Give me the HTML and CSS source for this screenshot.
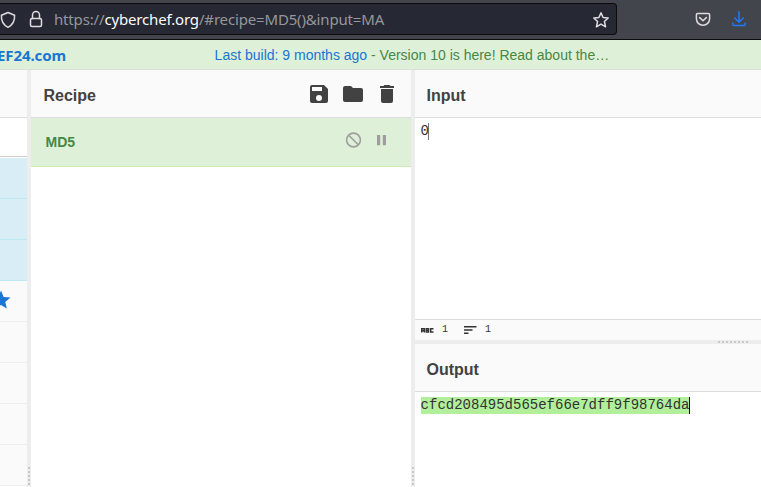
FILE: index.html
```html
<!DOCTYPE html>
<html lang="en">
<head>
<meta charset="utf-8">
<title>CyberChef</title>
<link rel="stylesheet" href="styles.css">
</head>
<body>
<header class="browser">
  <div class="urlbar">
    <svg class="shield" width="16" height="18" viewBox="0 0 16 18"><path d="M8 1.500 14.600 4.300C14.900 10 12.700 14 8 16.300 3.300 14 1.100 10 1.400 4.300Z"/></svg>
    <svg class="lock" width="14" height="18" viewBox="0 0 14 18"><rect x="1.500" y="8.500" width="11" height="8" rx="1.500"/><path d="M3.500 8.500V5a3.500 3.500 0 0 1 7 0v3.500"/></svg>
    <div class="url">https://<b>cyberchef.org</b>/#recipe=MD5()&amp;input=MA</div>
    <svg class="star" width="18" height="18" viewBox="0 0 18 18"><path d="M9 1.900 11.100 6.500 16.200 7 12.400 10.500 13.600 15.800 9 13.100 4.400 15.800 5.600 10.500 1.800 7 6.900 6.500Z"/></svg>
  </div>
  <svg class="pocket" width="16" height="16" viewBox="0 0 16 16"><path d="M2.700 2.400h10.600q1.300 0 1.300 1.300v4a6.600 6.600 0 0 1-13.200 0v-4q0-1.300 1.300-1.300ZM4.700 6.600 8 9.800l3.300-3.200"/></svg>
  <svg class="download" width="14" height="16" viewBox="0 0 14 16"><path d="M7 .8v10.500M2.700 7 7 11.200 11.300 7M.8 12v1.300q0 1.300 1.300 1.300h9.800q1.300 0 1.300-1.300V12"/></svg>
</header>
<div class="banner">
  <div class="brand">EF24.com</div>
  <div class="notice"><a>Last build: 9 months ago</a> - Version 10 is here! Read about the…</div>
</div>
<main class="workspace">
  <section class="operations">
    <div class="title"></div>
    <div class="search"></div>
    <div class="op"></div><div class="op"></div><div class="op"></div>
    <div class="category"><svg width="20" height="20" viewBox="0 0 20 20"><path d="M10 .5 12.600 6.900 19.500 7.400 14.200 11.900 15.900 18.600 10 15 4.100 18.600 5.800 11.900.5 7.400 7.400 6.900Z"/></svg></div>
    <div class="category"></div><div class="category"></div><div class="category"></div><div class="category"></div>
  </section>
  <div class="gutter"><i></i></div>
  <section class="recipe">
    <div class="title"><span>Recipe</span>
      <div class="actions">
        <svg width="24" height="24" viewBox="0 0 24 24"><path d="M17 3H5a2 2 0 0 0-2 2v14a2 2 0 0 0 2 2h14a2 2 0 0 0 2-2V7l-4-4zm-5 16a3 3 0 1 1 0-6 3 3 0 0 1 0 6zm3-10H5V5h10v4z"/></svg>
        <svg width="24" height="24" viewBox="0 0 24 24"><path d="M10 4H4a2 2 0 0 0-2 2v12a2 2 0 0 0 2 2h16a2 2 0 0 0 2-2V8a2 2 0 0 0-2-2h-8l-2-2z"/></svg>
        <svg width="24" height="24" viewBox="0 0 24 24"><path d="M6 19a2 2 0 0 0 2 2h8a2 2 0 0 0 2-2V7H6v12zM19 4h-3.500l-1-1h-5l-1 1H5v2h14V4z"/></svg>
      </div>
    </div>
    <div class="step"><span>MD5</span>
      <div class="controls">
        <svg width="18" height="18" viewBox="0 0 18 18"><circle cx="9.500" cy="9" r="6.900"/><path d="m4.700 4.200 9.600 9.600"/></svg>
        <svg class="pause" width="18" height="18" viewBox="0 0 18 18"><path d="M5 4h3.200v10.300H5zM10.800 4H14v10.300h-3.200z"/></svg>
      </div>
    </div>
  </section>
  <div class="gutter"><i></i></div>
  <section class="io">
    <div class="title"><span>Input</span></div>
    <div class="input"><span>0</span></div>
    <div class="status">
      <svg class="abc" width="13" height="5" viewBox="0 0 13 5"><path d="M.7 4.500V.7h2.600v3.800M.7 2.800h2.600M5.200.7h2.400v3.300H5.200ZM5 2.400h2.500M12.500.7H9.700v3.300h2.800"/></svg>
      <span>1</span>
      <svg class="lines" width="13" height="8" viewBox="0 0 13 8"><path d="M0 .8h12.500M0 4h8.500M0 7.200h4.500"/></svg>
      <span>1</span>
    </div>
    <div class="hgutter"><i></i></div>
    <div class="title"><span>Output</span></div>
    <div class="output"><span>cfcd208495d565ef66e7dff9f98764da</span></div>
  </section>
</main>
</body>
</html>
```
FILE: styles.css
```css
* { box-sizing: border-box; }
body { margin: 0; width: 761px; height: 487px; overflow: hidden; background: #fff; font: 14px/20px "Liberation Sans", sans-serif; }
svg { display: block; flex: none; }
.browser { height: 40px; background: #42454c; border-bottom: 1px solid #0c0c0e; display: flex; align-items: flex-start; }
.browser svg { fill: none; stroke: #dddde0; stroke-width: 1.5; stroke-linejoin: round; stroke-linecap: round; }
.urlbar { width: 617px; height: 32px; margin-top: 3px; background: #262833; border: 1px solid #0c0c0e; border-left: 0; border-radius: 0 4px 4px 0; display: flex; align-items: center; }
.shield { margin-top: 1px; }
.lock { margin-left: 13px; }
.url { margin-left: 11px; width: 538px; font: 15px/20px "Noto Sans", sans-serif; letter-spacing: -.16px; color: #96979b; white-space: nowrap; }
.url b { font-weight: 400; color: #fbfbfe; }
.star { margin-top: 1px; }
.browser .pocket { margin: 11px 0 0 78px; }
.browser .download { margin: 11px 0 0 21px; stroke: #2379f4; }
.banner { height: 30px; background: #dff0d8; border-bottom: 1px solid #ddd; display: flex; align-items: center; color: #468847; }
.brand { width: 66px; display: flex; justify-content: flex-end; color: #1976d2; font: bold 15px/20px "Noto Sans", sans-serif; letter-spacing: -.1px; }
.notice { margin-left: 148.600px; font-size: 14px; white-space: nowrap; }
.notice a { color: #1976d2; }
.workspace { height: 417px; display: flex; }
.title { height: 48px; background: #fafafa; border-bottom: 1px solid #ddd; padding: 5px 12px 0; display: flex; align-items: center; justify-content: space-between; color: #424242; font-size: 16px; font-weight: bold; }
.recipe .title { padding-left: 12.500px; }
.io .title { padding-left: 11.500px; }
.operations { width: 27px; overflow: hidden; }
.search { height: 39px; border-bottom: 1px solid #ccc; margin-bottom: 1px; }
.op { height: 41px; background: #d9edf7; border-bottom: 1px solid #bce8f1; }
.category { height: 41px; background: #fafafa; border-bottom: 1px solid #eee; display: flex; align-items: center; }
.category svg { margin-left: -9px; margin-top: -3px; fill: #1976d2; }
.gutter { width: 4px; background: #ededed; display: flex; align-items: flex-end; justify-content: center; }
.gutter i { width: 2px; height: 20px; background: repeating-linear-gradient(#c8c8c8 0 2px, transparent 2px 4px); }
.recipe { width: 380px; }
.actions { display: flex; gap: 10px; margin-top: -4px; }
.actions svg { fill: #424242; }
.step { height: 49px; background: #dff0d8; border-bottom: 1px solid #d0e9b8; color: #468847; font-weight: bold; padding: 0 21px 0 14.500px; display: flex; align-items: center; justify-content: space-between; }
.controls { display: flex; gap: 10px; margin-top: -4px; }
.controls svg { fill: none; stroke: #9e9e9e; stroke-width: 1.6; }
.controls .pause { fill: #9e9e9e; stroke: none; }
.io { width: 346px; }
.input { height: 201px; padding: 5px 5.500px; font: 14px/16px "Liberation Mono", monospace; color: #333; }
.input span, .output span { display: inline-block; height: 17px; box-shadow: inset -1px 0 #777; }
.status { height: 21px; background: #fafafa; border-top: 1px solid #ddd; padding: 0 6px; display: flex; align-items: center; font: 10px/12px "Liberation Mono", monospace; color: #333; }
.status svg { stroke: #333; stroke-width: 1.4; fill: none; }
.status span { margin: -1px 16px 0 8px; width: 6px; }
.hgutter { height: 4px; background: #ededed; display: flex; align-items: center; padding-left: 303px; }
.hgutter i { width: 30px; height: 2px; background: repeating-linear-gradient(90deg, #c8c8c8 0 2px, transparent 2px 4px); }
.output { padding: 5px 5.600px; font: 14px/16px "Liberation Mono", monospace; color: #333; }
.output span { background: #b2ef9b; padding-right: .6px; box-shadow: inset -1px 0 #111; }
```
